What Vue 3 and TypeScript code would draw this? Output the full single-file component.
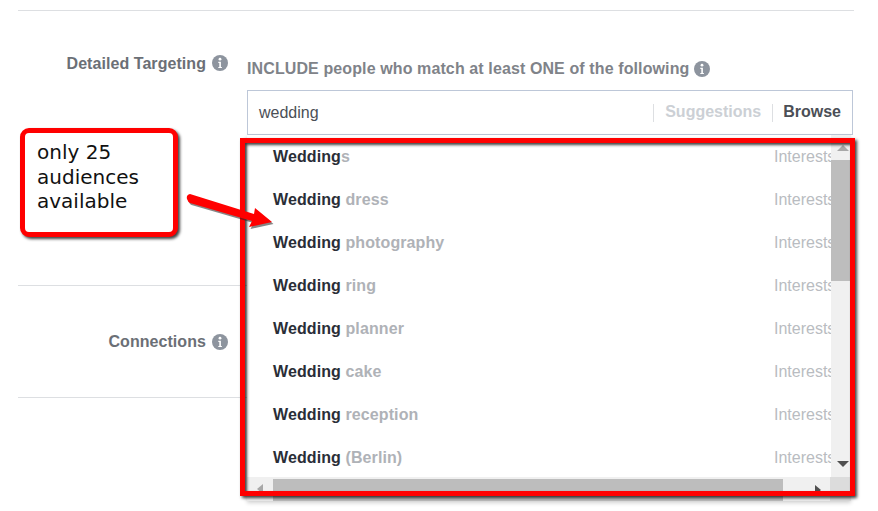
<template>
  <div class="page">
    <div class="form">
      <div class="labels">
        <div class="label-row first">
          <span>Detailed Targeting</span>
          <svg class="info" viewBox="0 0 16 16"><circle cx="8" cy="8" r="8" fill="#8d949e" /><circle cx="8" cy="4.2" r="1.4" fill="#fff" /><path d="M6.3 6.8h2.6v5.1h1v1.2H6.3v-1.2h1V8H6.3z" fill="#fff" /></svg>
        </div>
        <div class="label-row second">
          <span>Connections</span>
          <svg class="info" viewBox="0 0 16 16"><circle cx="8" cy="8" r="8" fill="#8d949e" /><circle cx="8" cy="4.2" r="1.4" fill="#fff" /><path d="M6.3 6.8h2.6v5.1h1v1.2H6.3v-1.2h1V8H6.3z" fill="#fff" /></svg>
        </div>
      </div>

      <div class="targeting">
        <div class="heading">
          <span>INCLUDE people who match at least ONE of the following</span>
          <svg class="info" viewBox="0 0 16 16"><circle cx="8" cy="8" r="8" fill="#8d949e" /><circle cx="8" cy="4.2" r="1.4" fill="#fff" /><path d="M6.3 6.8h2.6v5.1h1v1.2H6.3v-1.2h1V8H6.3z" fill="#fff" /></svg>
        </div>
        <div class="search">
          <span class="query">wedding</span>
          <span class="tab muted">Suggestions</span>
          <span class="tab">Browse</span>
        </div>

        <div class="dropdown">
          <div class="upper">
            <div class="list">
              <div v-for="item in items" :key="item.rest" class="item">
                <span class="name"><b>{{ item.match }}</b>{{ item.rest }}</span>
                <span class="type">Interests</span>
              </div>
            </div>
            <div class="vbar">
              <i class="arrow up"></i>
              <div class="vthumb"></div>
              <i class="arrow down"></i>
            </div>
          </div>
          <div class="hbar">
            <i class="arrow left"></i>
            <div class="hthumb"></div>
            <i class="arrow right"></i>
            <div class="corner"></div>
          </div>
          <div class="frame"></div>
        </div>
      </div>
    </div>

    <div class="callout">only 25 audiences available</div>
    <svg class="pointer" viewBox="0 0 100 50" width="100" height="50">
      <path d="M5 1 Q1 2 2 6 Q3 9 5 10 L67 28 L64 34 L87 29 L70 15 L69 21 Z" fill="#222" opacity="0.55" transform="translate(1.5 2)" />
      <path d="M5 1 Q1 2 2 6 Q3 9 5 10 L67 28 L64 34 L87 29 L70 15 L69 21 Z" fill="#f00" />
    </svg>
  </div>
</template>

<script setup lang="ts">
interface Item {
  match: string;
  rest: string;
}

const items: Item[] = [
  { match: 'Wedding', rest: 's' },
  { match: 'Wedding', rest: ' dress' },
  { match: 'Wedding', rest: ' photography' },
  { match: 'Wedding', rest: ' ring' },
  { match: 'Wedding', rest: ' planner' },
  { match: 'Wedding', rest: ' cake' },
  { match: 'Wedding', rest: ' reception' },
  { match: 'Wedding', rest: ' (Berlin)' },
];
</script>

<style>
html,
body {
  background: #fff;
}
</style>

<style scoped>
.page {
  position: relative;
  width: 878px;
  height: 511px;
  overflow: hidden;
  box-sizing: border-box;
  padding: 10px 24px 0 18px;
  font-family: "Liberation Sans", Arial, sans-serif;
  font-size: 16px;
}

.form {
  display: flex;
  border-top: 1px solid #dddfe2;
}

.labels {
  width: 229px;
  flex: none;
}

.label-row {
  display: flex;
  justify-content: flex-end;
  gap: 6px;
  font-weight: 700;
  letter-spacing: 0.06px;
  color: #6b6f76;
  border-bottom: 1px solid #dddfe2;
  box-sizing: border-box;
  padding-right: 19px;
}

.label-row.first {
  height: 275px;
  padding-top: 44px;
}

.label-row.second {
  height: 112px;
  align-items: center;
}

.info {
  width: 16px;
  height: 16px;
  flex: none;
}

.targeting {
  flex: 1;
  min-width: 0;
}

.heading {
  display: flex;
  align-items: center;
  gap: 5px;
  margin-top: 49px;
  height: 18px;
  font-weight: 700;
  letter-spacing: 0.11px;
  color: #7f8389;
}

.search {
  display: flex;
  align-items: center;
  box-sizing: border-box;
  height: 45px;
  width: 606px;
  margin-top: 12px;
  padding: 0 11px;
  border: 1px solid #bdc7d8;
  color: #4b4f56;
}

.query {
  flex: 1;
}

.tab {
  font-weight: 700;
  border-left: 1px solid #dddfe2;
  line-height: 16px;
  padding: 0 0 2px 10px;
  margin-left: 11px;
}

.tab.muted {
  color: #ccd0d5;
  padding-left: 11px;
}

.dropdown {
  position: relative;
  width: 604px;
  height: 366px;
  background: #fff;
  box-shadow: 0 2px 4px rgba(0, 0, 0, 0.18);
}

.upper {
  display: flex;
  height: 342px;
}

.list {
  flex: 1;
  min-width: 0;
  overflow: hidden;
}

.item {
  display: flex;
  align-items: center;
  height: 43px;
  padding-left: 26px;
  font-weight: 700;
  letter-spacing: 0.1px;
  color: #afb2b7;
  white-space: nowrap;
}

.item b {
  color: #2a2e37;
}

.name {
  flex: 1;
}

.type {
  flex: 0 0 57px;
  overflow: hidden;
  font-weight: 400;
  letter-spacing: 0;
  color: #b9bcc1;
}

.vbar {
  position: relative;
  width: 20px;
  flex: none;
  background: #f0f0f0;
  padding-top: 25px;
  box-sizing: border-box;
}

.vthumb {
  height: 121px;
  background: #bdbdbd;
}

.hbar {
  position: relative;
  height: 24px;
  background: #f0f0f0;
  padding: 2px 0 0 26px;
  box-sizing: border-box;
}

.hthumb {
  width: 510px;
  height: 22px;
  background: #bdbdbd;
}

.corner {
  position: absolute;
  right: 0;
  top: 0;
  width: 21px;
  height: 24px;
  background: #dcdcdc;
}

.arrow {
  position: absolute;
  width: 0;
  height: 0;
  border-style: solid;
  border-color: transparent;
}

.arrow.up {
  left: 6px;
  top: 10px;
  border-width: 0 6px 6px;
  border-bottom-color: #a8a8a8;
}

.arrow.down {
  left: 6px;
  bottom: 10px;
  border-width: 6px 6px 0;
  border-top-color: #505050;
}

.arrow.left {
  left: 10px;
  top: 7px;
  border-width: 5px 6px 5px 0;
  border-right-color: #a8a8a8;
}

.arrow.right {
  left: 568px;
  top: 8px;
  border-width: 5px 0 5px 6px;
  border-left-color: #505050;
}

.frame {
  position: absolute;
  left: -7px;
  top: 3px;
  box-sizing: border-box;
  width: 615px;
  height: 358px;
  border: 5px solid #f00;
  box-shadow: 2px 2px 3px rgba(0, 0, 0, 0.75), inset 2px 2px 3px rgba(0, 0, 0, 0.75);
}

.callout {
  position: absolute;
  left: 20px;
  top: 128px;
  box-sizing: border-box;
  width: 158px;
  height: 109px;
  padding: 7px 12px;
  border: 5px solid #f00;
  border-radius: 9px;
  background: #fff;
  box-shadow: 2px 2px 3px rgba(0, 0, 0, 0.75);
  font-family: "DejaVu Sans", sans-serif;
  font-size: 20px;
  line-height: 24.5px;
  color: #111;
}

.pointer {
  position: absolute;
  left: 185px;
  top: 193px;
}
</style>
